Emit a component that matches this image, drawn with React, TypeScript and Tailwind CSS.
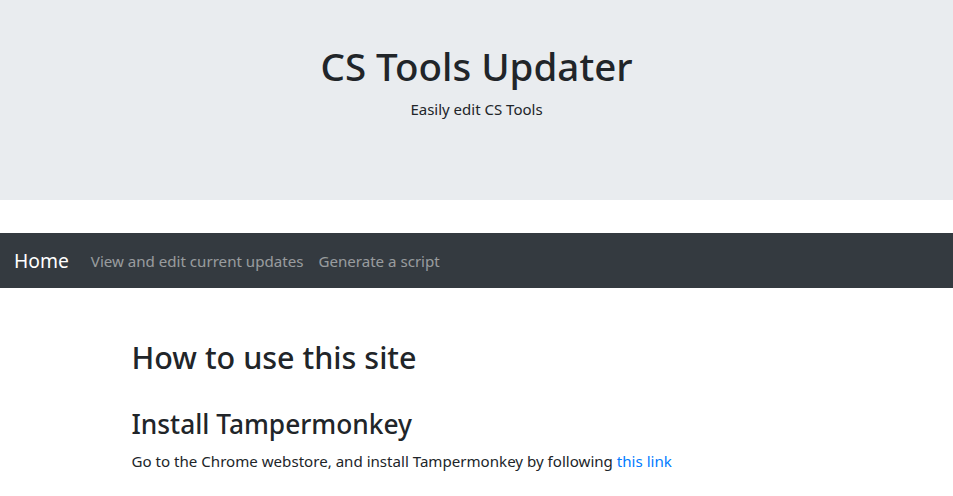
export default function App() {
  const font = { fontFamily: '"Noto Sans", "Open Sans", sans-serif' };
  return (
    <div style={font} className="min-h-[496px] bg-white text-[#212529]">
      <div className="bg-[#e9ecef] h-[200px] pt-[42px] mb-[33px] text-center">
        <h1 className="text-[38.5px] leading-[48px] font-medium mb-[7px]">CS Tools Updater</h1>
        <p className="text-[15px] leading-6">Easily edit CS Tools</p>
      </div>
      <nav className="bg-[#343a40] h-[55px] pl-[14px] pr-4 flex items-center">
        <a className="text-[19.3px] text-white mr-[14px] leading-[30px]">Home</a>
        <a className="px-2 text-[15.1px] text-white/50 leading-6">View and edit current updates</a>
        <a className="pl-[7px] pr-2 text-[15.1px] text-white/50 leading-6">Generate a script</a>
      </nav>
      <div className="w-[720px] mx-auto px-[15px] pt-[50px]">
        <h1 className="text-[30.5px] leading-[38px] font-medium mb-[31px]">How to use this site</h1>
        <h2 className="text-[26.3px] leading-[34px] font-medium mb-2">Install Tampermonkey</h2>
        <p className="text-[15.1px] leading-6">
          Go to the Chrome webstore, and install Tampermonkey by following{" "}
          <a className="text-[#007bff]">this link</a>
        </p>
      </div>
    </div>
  );
}
